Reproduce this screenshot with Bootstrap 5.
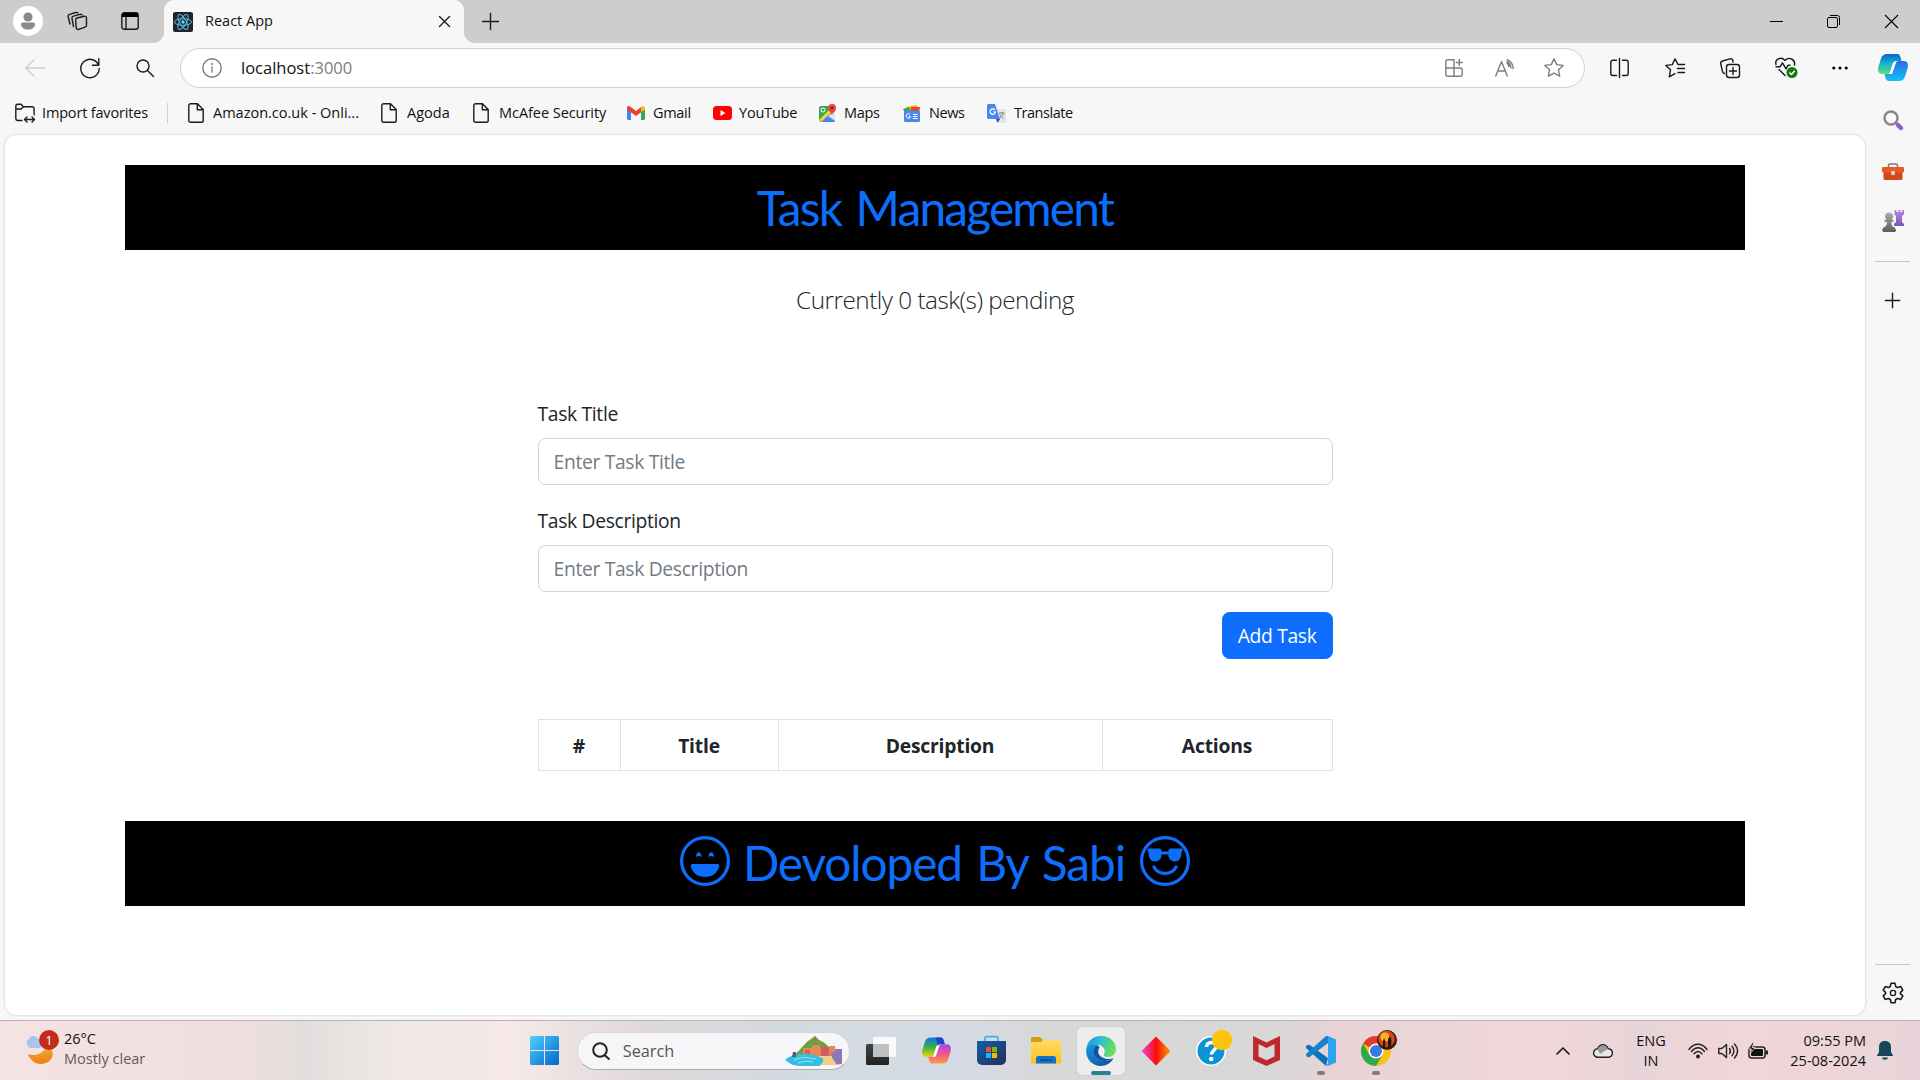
<!DOCTYPE html>
<html lang="en">
<head>
<meta charset="utf-8">
<title>React App</title>
<link rel="stylesheet" href="https://cdn.jsdelivr.net/npm/bootstrap@5.3.0/dist/css/bootstrap.min.css">
<style>
:root{font-size:20px}
body{width:1920px;height:1080px;overflow:hidden;font-family:"Open Sans","Noto Sans",sans-serif;font-size:14.5px;line-height:20px;color:#111;background:#f7f7f7}
svg{display:block;overflow:visible;flex:none}
.ln{fill:none;stroke:#1b1b1b;stroke-width:1.4;stroke-linecap:round;stroke-linejoin:round}
.gr{stroke:#7d7d7d}
/* tab strip */
.strip{height:43px;background:#cdcdcd;display:grid;grid-template-columns:56px 42px 63px 306px 47px 1fr 57px 57px 58px;justify-items:center;align-items:center}
.tab-live{width:300px;height:43px;background:#f7f7f7;border-radius:10px 10px 0 0;position:relative;padding:0 14px 0 9px;justify-self:start;margin-left:3px}
.tab-live::before,.tab-live::after{content:"";position:absolute;bottom:0;width:10px;height:10px}
.tab-live::before{left:-10px;background:radial-gradient(circle at 0 0,transparent 9.5px,#f7f7f7 10px)}
.tab-live::after{right:-10px;background:radial-gradient(circle at 100% 0,transparent 9.5px,#f7f7f7 10px)}
.strip>svg{margin-bottom:1px}
/* toolbar */
.tools{height:49px;display:grid;grid-template-columns:12px 46px 64px 46px 12px 1405px 8px 52px 60px 50px 62px 46px 1fr;align-items:center;justify-items:center}
.omni{width:1405px;height:40px;border:1px solid #cfcfcf;border-radius:20px;background:#fff;display:grid;grid-template-columns:11px 40px 1fr 50px 50px 50px 5px;align-items:center;justify-items:center}
.omni .addr{justify-self:start;margin-left:9px;font-size:16.5px}
/* favourites */
.favs{height:43px;padding:0 0 1px 15px}
.favs span{white-space:nowrap;letter-spacing:-.12px}
.fav{display:flex;align-items:center}
.fav svg{margin-right:7px}
/* viewport */
.main{height:885px}
.view{width:1860px;height:880px;margin-left:5px;background:#fff;border-radius:12px;box-shadow:0 0 3px #0003;padding-top:30px}
.app{width:1620px;margin:0 auto;font-size:19.3px;line-height:30px;letter-spacing:-.33px;color:#212529}
.band{height:85px;background:#000;color:#0d6efd;font-family:Lato,sans-serif;font-size:47.8px;line-height:85px;white-space:nowrap}
.band.top{letter-spacing:-1.8px;word-spacing:4px}
.band.bot{letter-spacing:-1.1px;word-spacing:3px}
.band.bot span{padding-bottom:2px}
.pend{font-weight:300;font-size:24.3px;line-height:38px;letter-spacing:-.5px;margin:31px 0 79px}
.formcol{width:795px;margin:0 auto}
.formcol .form-label{padding-top:1px;line-height:29px}
.formcol .form-control,.formcol .btn{font-size:19.3px;letter-spacing:-.33px;line-height:30px}
.formcol .form-control{border-color:#ced4da}
.formcol .form-control::placeholder{color:#727a82}
.formcol th{letter-spacing:-.2px;line-height:29px;padding-top:11px}
.side{width:55px;flex:none}
/* taskbar */
.taskbar{height:60px;flex:none;border-top:1px solid #b9b0b1;background:linear-gradient(90deg,#f5e2e2 0,#f1dfdf 230px,#e3dedd 300px,#efe8e7 400px,#f6e9e8 510px,#e0d9db 640px,#d3dadf 780px,#d5dbe5 950px,#d8d8d8 1050px,#d9d7d7 1280px,#e9d3d6 1340px,#ead5d8 1440px,#f3d6d9 1520px,#e8d5d9 1640px,#f2d5d8 1740px,#e8d5d9 1920px);display:grid;grid-template-columns:25px 492px 55px 281.5px repeat(10,55px) 139.5px 40px 40px 56px 38px 22px 38px 89px 38px;align-items:center;justify-items:center}
.find{width:273px;height:38px;border-radius:19px;background:#f6f6f8;border:1px solid #d9d5d8;border-bottom-color:#aaa9ad;padding:0 7px 0 14px;margin-left:1px}
.app-ic{width:48px;height:48px;border-radius:5px;position:relative}
.app-ic.now{background:#ededed;box-shadow:0 0 1px #999}
.app-ic i{position:absolute;bottom:0;left:50%;width:8px;height:4px;margin-left:-4px;border-radius:2px;background:#847a7c}
.app-ic.now i{width:20px;margin-left:-10px;background:#27838f}
.badge-n{position:absolute;left:14px;top:0;width:20px;height:20px;border-radius:50%;background:#c42b1c;color:#fff;text-align:center;font-size:13px;line-height:20px}
</style>
</head>
<body>
<svg width="0" height="0" class="position-absolute">
<defs>
<linearGradient id="gb" x1="0" y1="0" x2="0" y2="1"><stop offset="0" stop-color="#0b62c4"/><stop offset=".45" stop-color="#14b0d4"/><stop offset="1" stop-color="#5be07a"/></linearGradient>
<linearGradient id="gc" x1="0" y1="0" x2="0" y2="1"><stop offset="0" stop-color="#2a6be8"/><stop offset="1" stop-color="#17c0f5"/></linearGradient>
<linearGradient id="gd" x1="0" y1="0" x2="0" y2="1"><stop offset="0" stop-color="#1473e6"/><stop offset=".5" stop-color="#35b24a"/><stop offset="1" stop-color="#f5d000"/></linearGradient>
<linearGradient id="ge" x1="0" y1="0" x2="0" y2="1"><stop offset="0" stop-color="#a04be8"/><stop offset=".5" stop-color="#f0558a"/><stop offset="1" stop-color="#ff9a3c"/></linearGradient>
<linearGradient id="gw" gradientUnits="userSpaceOnUse" x1="0" y1="0" x2="29" y2="29"><stop offset="0" stop-color="#4fd0ff"/><stop offset="1" stop-color="#0467c8"/></linearGradient>
<linearGradient id="gm" x1="0" y1="0" x2="0" y2="1"><stop offset="0" stop-color="#f3b43a"/><stop offset="1" stop-color="#f07a12"/></linearGradient>
<linearGradient id="gs" x1="0" y1="0" x2="1" y2="1"><stop offset="0" stop-color="#0f5fae"/><stop offset="1" stop-color="#262f55"/></linearGradient>
<linearGradient id="gf" x1="0" y1="0" x2="0" y2="1"><stop offset="0" stop-color="#ffdb69"/><stop offset="1" stop-color="#ffc21a"/></linearGradient>
<linearGradient id="g1" x1="0" y1="0" x2="1" y2=".3"><stop offset="0" stop-color="#1b8fdb"/><stop offset=".5" stop-color="#2bc0d2"/><stop offset="1" stop-color="#64e05a"/></linearGradient>
<linearGradient id="g2" x1="0" y1="0" x2="1" y2="1"><stop offset="0" stop-color="#1a9ae0"/><stop offset="1" stop-color="#0b4a9e"/></linearGradient>
<linearGradient id="gr" x1="0" y1="0" x2="1" y2="0"><stop offset="0" stop-color="#f04ad8"/><stop offset=".5" stop-color="#fb0a10"/><stop offset="1" stop-color="#ff9a00"/></linearGradient>
<linearGradient id="gp" x1="0" y1="0" x2="0" y2="1"><stop offset="0" stop-color="#bb86f0"/><stop offset="1" stop-color="#7a55b0"/></linearGradient>
<linearGradient id="gk" x1="0" y1="0" x2="0" y2="1"><stop offset="0" stop-color="#adadad"/><stop offset="1" stop-color="#5c5c5c"/></linearGradient>
<linearGradient id="gt" x1="0" y1="0" x2="0" y2="1"><stop offset="0" stop-color="#444"/><stop offset="1" stop-color="#222"/></linearGradient>
<symbol id="doc" viewBox="0 0 16 20"><path class="ln" d="M2.500.8h7l5.700 5.800v10.900a1.800 1.800 0 0 1-1.800 1.800H2.600a1.800 1.800 0 0 1-1.800-1.800V2.600A1.800 1.800 0 0 1 2.500.8zM9.300 1v5.800h5.700"/></symbol>
</defs>
</svg>
<div class="d-flex flex-column h-100">
<header class="strip">
  <svg width="30" height="30" viewBox="0 0 30 30"><circle cx="15" cy="15" r="15" fill="#fff"/><circle cx="15" cy="11" r="4.600" fill="#8a8a8a"/><path d="M9.500 16.500h11A1.500 1.500 0 0 1 22 18c0 3.500-3 5.500-7 5.500S8 21.500 8 18a1.500 1.500 0 0 1 1.500-1.500z" fill="#8a8a8a"/></svg>
  <svg width="20" height="20" viewBox="0 0 20 20"><g class="ln"><path d="M10 7l7-1.800a2 2 0 0 1 2.500 2v7a2 2 0 0 1-1.400 1.900l-6.300 2.300a2 2 0 0 1-2.600-1.600L8.700 9.200A2 2 0 0 1 10 7z"/><path d="M6.500 15.500L5 7.500a2 2 0 0 1 1.500-2.400l6.500-1.800a2 2 0 0 1 2 .6M3 13L1.200 6a2 2 0 0 1 1.500-2.600l6-1.900a2 2 0 0 1 2.100.5"/></g></svg>
  <svg width="18" height="18" viewBox="0 0 18 18"><rect class="ln" x=".8" y=".8" width="16.400" height="16.400" rx="2.500"/><path d="M1 5V3a2 2 0 0 1 2-2h12a2 2 0 0 1 2 2v2z"/><path class="ln" d="M5 5v12"/></svg>
  <div class="tab-live d-flex align-items-center">
    <svg width="20" height="20" viewBox="0 0 20 20"><rect width="20" height="20" rx="2" fill="#20232a"/><g fill="none" stroke="#53c1de" stroke-width="1"><ellipse cx="10" cy="10" rx="8.500" ry="3.300"/><ellipse cx="10" cy="10" rx="8.500" ry="3.300" transform="rotate(60 10 10)"/><ellipse cx="10" cy="10" rx="8.500" ry="3.300" transform="rotate(120 10 10)"/></g><circle cx="10" cy="10" r="1.700" fill="#61dafb"/></svg>
    <span class="flex-grow-1" style="padding:0 0 1px 12px">React App</span>
    <svg width="11" height="11" viewBox="0 0 11 11"><path class="ln" d="M.5.5l10 10M10.500.5l-10 10"/></svg>
  </div>
  <svg width="17" height="17" viewBox="0 0 17 17"><path class="ln" d="M8.500.5v16M.5 8.500h16"/></svg>
  <span></span>
  <svg width="13" height="13" viewBox="0 0 13 13"><path d="M0 6.500h13" stroke="#000"/></svg>
  <svg width="13" height="13" viewBox="0 0 13 13" fill="none" stroke="#000"><rect x=".5" y="2.500" width="10" height="10" rx="1.500"/><path d="M3 .5h7.500a2 2 0 0 1 2 2V10"/></svg>
  <svg width="13" height="13" viewBox="0 0 13 13"><path d="M0 0l13 13M13 0L0 13" stroke="#000" stroke-width="1.100"/></svg>
</header>
<div class="d-flex">
<div class="flex-grow-1">
<nav class="tools">
  <span></span>
  <svg width="20" height="18" viewBox="0 0 20 18"><path class="ln" style="stroke:#cfcfcf" d="M19.500 9H1M9 .7L.7 9 9 17.300"/></svg>
  <svg width="20" height="20" viewBox="0 0 20 20"><path class="ln" d="M18.500 7A9.200 9.200 0 1 0 19.200 10.500M18.800.8v6.400h-6.300"/></svg>
  <svg width="18" height="18" viewBox="0 0 18 18"><g class="ln"><circle cx="7" cy="7" r="6"/><path d="M11.500 11.500l6 6"/></g></svg>
  <span></span>
  <div class="omni">
    <span></span>
    <svg width="20" height="20" viewBox="0 0 20 20"><circle class="ln gr" cx="10" cy="10" r="9.200"/><path class="ln gr" d="M10 9v5"/><circle cx="10" cy="6" r="1" fill="#777"/></svg>
    <span class="addr">localhost<span style="color:#7d7d7d">:3000</span></span>
    <svg width="18" height="18" viewBox="0 0 18 18"><path class="ln gr" d="M2.500.8H9v8.200H.8V2.500A1.700 1.700 0 0 1 2.500.8zM.8 9v6.500a1.700 1.700 0 0 0 1.700 1.700h13a1.700 1.700 0 0 0 1.700-1.700V10.700A1.700 1.700 0 0 0 15.500 9H9v8.200M14.300.5v6M11.300 3.500h6"/></svg>
    <svg width="19" height="18" viewBox="0 0 19 18"><path class="ln gr" d="M.7 17L6.500 2.500 12.300 17M2.700 12h7.600M12 4c1 .9 1.600 2.100 1.600 3.500M12.200 .6c3.200 1.300 5.600 4.600 6 9M12 2.400c2.100 1.300 3.600 3.500 4 6.400"/></svg>
    <svg width="20" height="19" viewBox="0 0 20 19"><path class="ln gr" d="M10 .8l2.700 5.800 6.500.8-4.700 4.400 1.200 6.400L10 15.100l-5.700 3.100 1.200-6.400L.8 7.400l6.500-.8z"/></svg>
    <span></span>
  </div>
  <span></span>
  <svg width="19" height="20" viewBox="0 0 19 20"><path class="ln" d="M6.500 2.300H2.800a2 2 0 0 0-2 2v11.200a2 2 0 0 0 2 2h3.700M12.500 2.300h3.700a2 2 0 0 1 2 2v11.200a2 2 0 0 1-2 2h-3.700M9.500.5v19"/></svg>
  <svg width="20" height="20" viewBox="0 0 20 20"><path class="ln" d="M13 6.500L10 .8 7.300 6.600.8 7.400l4.700 4.400-1.200 7L10 15.700M12.500 10.500h7M13 14.500h6.500M13 6.500h6.500"/></svg>
  <svg width="20" height="20" viewBox="0 0 20 20"><g class="ln"><rect x="6.500" y="6.500" width="13" height="13" rx="2.500"/><path d="M13 9.500v7M9.500 13h7M4.500 15.500a3 3 0 0 1-2-2L.8 6a2.500 2.500 0 0 1 1.700-3L10 .9a2.500 2.500 0 0 1 3 1.800V4"/></g></svg>
  <svg width="22" height="21" viewBox="0 0 22 21"><g class="ln"><path d="M1 7.500C-.5 2.500 6-1 10 3.500c4-4.500 10.500-1 9.500 4.500M4 12.500l6 6M1 9.800h4l2.500-4 3.500 6 2-3.500h2"/></g><circle cx="17" cy="15.500" r="5.500" fill="#107c10"/><path d="M14.500 15.500l2 2 3.200-3.800" fill="none" stroke="#fff" stroke-width="1.500"/></svg>
  <svg width="16" height="4" viewBox="0 0 16 4"><circle cx="1.800" cy="2" r="1.600"/><circle cx="8" cy="2" r="1.600"/><circle cx="14.200" cy="2" r="1.600"/></svg>
</nav>
<div class="favs d-flex align-items-center">
  <div class="fav"><svg width="20" height="20" viewBox="0 0 20 20"><path class="ln" d="M7 17.500H2.600A1.900 1.900 0 0 1 .8 15.600V3A1.900 1.900 0 0 1 2.700 1.200H6l2.500 2.500h8.600a2 2 0 0 1 2 2v6M.8 6h5.200l2.500-2.300M10 16.500h9.500M12 14l-2.500 2.500L12 19M17 14l2.500 2.500L17 19"/></svg><span style="width:106px;letter-spacing:-.17px">Import favorites</span></div>
  <div style="width:1px;height:20px;background:#cfcfcf;margin:0 20px 0 19px"></div>
  <div class="fav"><svg width="16" height="20" style="margin-right:9px"><use href="#doc"/></svg><span style="width:146px;letter-spacing:0">Amazon.co.uk - Onli...</span></div>
  <div class="fav" style="margin-left:22px"><svg width="16" height="20" style="margin-right:10px"><use href="#doc"/></svg><span style="width:44px;letter-spacing:0">Agoda</span></div>
  <div class="fav" style="margin-left:22px"><svg width="16" height="20" style="margin-right:10px"><use href="#doc"/></svg><span style="width:108px;letter-spacing:-.05px">McAfee Security</span></div>
  <div class="fav" style="margin-left:20px"><svg width="18" height="14" viewBox="0 0 18 14" style="margin-right:8px"><path fill="#4285f4" d="M0 2v10.500A1.500 1.500 0 0 0 1.500 14H4V5z"/><path fill="#34a853" d="M18 2v10.500a1.500 1.500 0 0 1-1.500 1.500H14V5z"/><path fill="#ea4335" d="M0 2C0 0 2-.5 3.500.7L9 5l5.500-4.300V6L9 10 0 3.500z"/><path fill="#fbbc04" d="M14 1.200C16-.7 18 .3 18 2v1.500L14 6z"/></svg><span style="width:39px;letter-spacing:-.3px">Gmail</span></div>
  <div class="fav" style="margin-left:21px"><svg width="19" height="14" viewBox="0 0 19 14"><rect width="19" height="14" rx="3.500" fill="#f00"/><path d="M7.500 4l5 3-5 3z" fill="#fff"/></svg><span style="width:58px;letter-spacing:-.2px">YouTube</span></div>
  <div class="fav" style="margin-left:21px"><svg width="19" height="19" viewBox="0 0 19 19"><rect x="1" y="2" width="16" height="16" rx="2" fill="#35a853"/><path d="M3 18l7-8 7 8z" fill="#4285f4"/><path d="M1 16L14 3l3 2L3 18z" fill="#fbd03a"/><path d="M10 12l7-5v10z" fill="#dfe3e8"/><path d="M14 11c-.5-2.500-4-3.500-4-7a4 4 0 0 1 8 0c0 3.500-3.500 4.500-4 7z" fill="#e8453c"/><circle cx="14" cy="4" r="1.300" fill="#7d1a14"/><circle cx="5" cy="6" r="2" fill="none" stroke="#fff"/></svg><span style="width:37px;letter-spacing:-.3px">Maps</span></div>
  <div class="fav" style="margin-left:22px"><svg width="18" height="17" viewBox="0 0 18 17"><path d="M3 2l11-2 1 6H4z" fill="#fbbc04"/><path d="M8 2h9l-1 6H8z" fill="#ea4335"/><path d="M0 4l6-2 3 6H2z" fill="#34a853"/><rect x="1" y="5.500" width="16" height="11.500" rx="1.500" fill="#4f86ec"/><path d="M7 9.500a2.200 2.200 0 1 0 .5 2H5.800M10 9.500h4.500M10 11.500h4.500M10 13.500h4.500" fill="none" stroke="#fff"/></svg><span style="width:37px;letter-spacing:-.4px;margin-left:1px">News</span></div>
  <div class="fav" style="margin-left:21px"><svg width="19" height="19" viewBox="0 0 19 19"><path d="M7 5h10.500A1.500 1.500 0 0 1 19 6.500v11a1.500 1.500 0 0 1-1.500 1.500H12z" fill="#e3e5e8"/><path d="M1.500 0H8l5 15H1.500A1.500 1.500 0 0 1 0 13.500v-12A1.500 1.500 0 0 1 1.500 0z" fill="#4c87ee"/><path d="M9 15h4l-2.500 4z" fill="#2b50b8"/><path d="M8 6a2.700 2.700 0 1 0 .5 2H6" fill="none" stroke="#fff" stroke-width="1.200"/><path d="M12 9h5.500M15 8v1M16.500 9c-.5 2.500-2 4-4 5M13 10.500c1 2 2 3 3.500 4" fill="none" stroke="#7b8086"/></svg><span style="letter-spacing:-.45px;margin-left:1px">Translate</span></div>
</div>
<main class="main">
  <div class="view">
    <div class="app">
      <h1 class="band top text-center mb-0 fw-normal">Task Management</h1>
      <p class="pend text-center">Currently 0 task(s) pending</p>
      <div class="formcol">
        <form>
          <div class="mb-3"><label class="form-label d-block mb-2" for="tt">Task Title</label><input id="tt" class="form-control" placeholder="Enter Task Title"></div>
          <div class="mb-3"><label class="form-label d-block mb-2" for="td">Task Description</label><input id="td" class="form-control" placeholder="Enter Task Description"></div>
          <div class="text-end"><button type="button" class="btn btn-primary">Add Task</button></div>
        </form>
        <table class="table table-bordered text-center mb-0" style="margin-top:60px;table-layout:fixed">
          <colgroup><col style="width:82px"><col style="width:158px"><col style="width:324px"><col></colgroup>
          <thead><tr><th>#</th><th>Title</th><th>Description</th><th>Actions</th></tr></thead>
        </table>
      </div>
      <div class="band bot d-flex justify-content-center align-items-center" style="margin-top:50px">
        <svg width="50" height="50" viewBox="0 0 50 50" class="mb-1"><circle cx="25" cy="25" r="23.400" fill="none" stroke="#0d6efd" stroke-width="3.200"/><path d="M12.500 28h25a1.800 1.800 0 0 1 1.700 2.200C37.500 37 32 41 25 41s-12.500-4-14.200-10.800A1.800 1.800 0 0 1 12.500 28z" fill="#0d6efd"/><path d="M16 21c0-6.500 5.500-6.500 5.500 0-1.700-1.500-3.800-1.500-5.500 0zM28.500 21c0-6.500 5.500-6.500 5.500 0-1.700-1.500-3.800-1.500-5.500 0z" fill="#0d6efd"/></svg>
        <span style="margin:0 15px 0 13px">Devoloped By Sabi</span>
        <svg width="50" height="50" viewBox="0 0 50 50" class="mb-1"><circle cx="25" cy="25" r="23.400" fill="none" stroke="#0d6efd" stroke-width="3.200"/><path d="M7.500 12.500H19q2.500 0 2.700 3h6.600q.2-3 2.700-3h11.500v2.500l-1 .8c0 6-2 9.700-6.500 9.700-4 0-6.500-3-6.700-7h-6.600c-.2 4-2.700 7-6.700 7-4.500 0-6.500-3.700-6.500-9.700l-1-.8z" fill="#0d6efd"/><path d="M14 31c4.500 8.500 17.500 8.500 22 0" fill="none" stroke="#0d6efd" stroke-width="3.200" stroke-linecap="round"/></svg>
      </div>
    </div>
  </div>
</main>
</div>
<aside class="side d-flex flex-column align-items-center">
  <svg width="30" height="27" viewBox="0 0 30 27" style="margin-top:11px"><path d="M9 0h10c2 0 3 1 3.500 3l1 4h-5c-2 0-3 1-3.500 3l-2.500 7c-.7 2-1.500 3-3.500 3H4c-4 0-4.500-4-3.500-7.500L3 4.500C4 1.500 6 0 9 0z" fill="url(#gb)"/><path d="M21 27H11c-2 0-3-1-3.500-3l-1-4h5c2 0 3-1 3.500-3l2.500-7c.7-2 1.500-3 3.500-3h5c4 0 4.500 4 3.500 7.500L27 22.500c-1 3-3 4.500-6 4.500z" fill="url(#gc)"/><path d="M17.500 9l-3.500 11h-2.500L15 8.500z" fill="#fff"/></svg>
  <svg width="20" height="20" viewBox="0 0 20 20" style="margin-top:29px"><circle cx="8" cy="8" r="6.500" fill="#fafafa" stroke="#888" stroke-width="2.400"/><path d="M12.500 13l2 2" stroke="#888" stroke-width="2"/><path d="M15 15l3 3" stroke="#8e5fc8" stroke-width="4.500" stroke-linecap="round"/></svg>
  <svg width="22" height="17" viewBox="0 0 22 17" style="margin-top:33px"><path d="M6.500 5V2.500A1.500 1.500 0 0 1 8 1h6a1.500 1.500 0 0 1 1.500 1.500V5" fill="none" stroke="#7a7a7a" stroke-width="1.500"/><rect x="1.500" y="8" width="19" height="9" rx="1.500" fill="#d2481a"/><rect y="4" width="22" height="5.500" rx="1.200" fill="#e85a22"/><circle cx="11" cy="10" r="2.200" fill="#d5d5d5"/></svg>
  <svg width="22" height="22" viewBox="0 0 22 22" style="margin-top:30px"><path d="M12.500 0h2v2h2V0h2v2h1.500V0h2v4.500l-2 1.500v6l2 2v2h-10v-2l2-2V6l-1.500-1.500z" fill="url(#gp)"/><path d="M7.200 2.500a4 4 0 0 1 2.800 7l1.500.7v1.800H9.300c0 3 1 4.500 3.200 5.500l1.700 2.500-1 2H1.200L0 20l1.500-2.500c2.200-1 3.500-2.500 3.500-5.500H2.500v-1.800L4.300 9.500a4 4 0 0 1 2.900-7z" fill="url(#gk)"/></svg>
  <div style="width:35px;height:1px;background:#c6c6c6;margin-top:29px"></div>
  <svg width="15" height="15" viewBox="0 0 15 15" style="margin-top:31px"><path class="ln" d="M7.500.3v14.400M.3 7.500h14.400"/></svg>
  <div style="width:35px;height:1px;background:#c6c6c6;margin-top:656px"></div>
  <svg width="22" height="22" viewBox="-11 -11 22 22" style="margin-top:17px"><path class="ln" style="stroke-width:1.600" d="M-2-9.700h4l.7 3.200 2 1.100 3.100-1 2 3.500-2.400 2.200v1.400l2.400 2.200-2 3.500-3.100-1-2 1.100-.7 3.200h-4l-.7-3.200-2-1.100-3.100 1-2-3.500 2.400-2.200V-.7l-2.400-2.200 2-3.500 3.100 1 2-1.100z"/><circle class="ln" r="2.600"/></svg>
</aside>
</div>
<footer class="taskbar">
  <span></span>
  <div class="d-flex align-items-center" style="justify-self:start;padding-bottom:3px">
    <div class="position-relative" style="margin-bottom:5px"><svg width="34" height="34" viewBox="0 0 34 34"><path d="M3 24c9 3 17-2 19-9 9 4 8 18-6 19-6 0-11-4-13-10z" fill="url(#gm)"/><path d="M5 18a5 5 0 0 1-1-9C5 5 11 5 13 9c5-1 6 9 1 9z" fill="#a9c4f1"/></svg><span class="badge-n">1</span></div>
    <div style="padding-left:5px"><div>26°C</div><div style="color:#5f5a5b">Mostly clear</div></div>
  </div>
  <svg width="29" height="29" viewBox="0 0 29 29" fill="url(#gw)"><path d="M1 0h13v14H0V1zM15 0h13l1 1v13H15zM0 15h14v14H1l-1-1zM15 15h14v13l-1 1H15z"/></svg>
  <div class="find d-flex align-items-center">
    <svg width="18" height="18" viewBox="0 0 18 18"><g fill="none" stroke="#222" stroke-width="2"><circle cx="8" cy="8" r="6.800"/><path d="M12.500 13l5 4.500"/></g></svg>
    <span style="font-size:16.300px;color:#555;padding-left:13px">Search</span>
    <svg class="ms-auto" width="57" height="30" viewBox="0 0 57 30"><path d="M8 20c6-4 12-14 18-17l4-3 4 4c6 2 12 8 16 16z" fill="#6f9e3e"/><path d="M30 0l2 5h-4z" fill="#a87748"/><path d="M18 12h9V9h8v3h9v-2h6v10H18z" fill="#e58a55"/><path d="M20 14h5v7h-5zM36 11h8v10h-8z" fill="#cf5f5c"/><path d="M46 16h4v-3h7v15l-9 1z" fill="#8d7ab5"/><path d="M12 20h34l6 9H36z" fill="#f3cf85"/><path d="M0 24c8-8 28-7 37-2 4 3-2 6-2 8H15C7 30 3 26 0 24z" fill="#35bfe3"/><path d="M9 24c8-4 17-2 22-1M13 27c6-2 10-2 15-1" stroke="#9ae4f2" fill="none"/><path d="M8 16h3v5H7z" fill="#555b86"/></svg>
  </div>
  <svg width="30" height="28" viewBox="0 0 30 28"><rect y="7" width="23" height="21" rx="1.500" fill="url(#gt)"/><rect x="7" width="23" height="20" rx="1.500" fill="#fff" opacity=".85"/><path d="M7 7h16v13H7z" fill="#bfc0c1"/></svg>
  <svg width="29" height="27" viewBox="0 0 30 27"><path d="M9 0h10c2 0 3 1 3.500 3l1 4h-5c-2 0-3 1-3.500 3l-2.500 7c-.7 2-1.500 3-3.500 3H4c-4 0-4.500-4-3.500-7.500L3 4.500C4 1.500 6 0 9 0z" fill="url(#gd)"/><path d="M21 27H11c-2 0-3-1-3.500-3l-1-4h5c2 0 3-1 3.500-3l2.500-7c.7-2 1.500-3 3.500-3h5c4 0 4.500 4 3.500 7.500L27 22.500c-1 3-3 4.500-6 4.500z" fill="url(#ge)"/><path d="M14 0h5c2 0 3 1 3.500 3l1 4h-5c-1 0-2 .5-2.500 1z" fill="#1b48c8"/><path d="M17.500 9l-3.500 11h-2.500L15 8.500z" fill="#fff"/></svg>
  <svg width="29" height="29" viewBox="0 0 29 29"><path d="M8 6V2a1.500 1.500 0 0 1 1.500-1.300h10A1.500 1.500 0 0 1 21 2v4" fill="none" stroke="#2bb6f2" stroke-width="1.700"/><path d="M0 5h29v19a5 5 0 0 1-5 5H5a5 5 0 0 1-5-5z" fill="url(#gs)"/><path d="M9 11h5v5H9z" fill="#f25022"/><path d="M15 11h5v5h-5z" fill="#7fba00"/><path d="M9 17h5v5H9z" fill="#1fb0f5"/><path d="M15 17h5v5h-5z" fill="#ffb900"/></svg>
  <svg width="30" height="27" viewBox="0 0 30 27"><path d="M0 1.500A1.500 1.500 0 0 1 1.500 0H9l3 3v5H0z" fill="#d99b0b"/><path d="M0 5h10l2-2h16.500A1.500 1.500 0 0 1 30 4.500V25a1.500 1.500 0 0 1-1.500 1.500h-27A1.500 1.500 0 0 1 0 25z" fill="url(#gf)"/><path d="M5 26.500v-5a2.500 2.500 0 0 1 2.500-2.500h15a2.500 2.500 0 0 1 2.500 2.500v5z" fill="#1172c8"/><path d="M9 23h12" stroke="#0a4e92" stroke-width="1.500"/></svg>
  <div class="app-ic now d-flex align-items-center justify-content-center"><svg width="30" height="30" viewBox="0 0 30 30"><path d="M.2 14C1 5 7 0 15 0c9 0 15 6 15 13 0 5-4 8-8 8-3 0-5-1-4.500-2.500C20 15 18 9 11 9 6 9 1.500 11 .2 14z" fill="url(#g1)"/><path d="M.1 15C0 11 5 8 11 9c-4 2-5 7-2.500 11 3 5 11 7 19 2.500C25 27 20 30 15 30 6 30 .2 23 .1 15z" fill="url(#g2)"/><path d="M11 9c7 0 9 6 7 9.500-.5.700-.5 1.500.5 2-5-.5-8-2.500-7.500-5.500.2-2 1-3 2-4-1-.8-1-1.300-2-2z" fill="#ededed" opacity=".9"/><path d="M11 9c-4 2-5 7-2.500 11 3 5 11 7 19 2.500-6 1.500-13.500-.5-15-5-.8-3 .2-5 1-6-.5-1-1.500-2-2.500-2.500z" fill="#0d55a6"/></svg><i></i></div>
  <svg width="30" height="30" viewBox="0 0 30 30"><path d="M15 .5L29.500 15 15 29.500.5 15z" fill="url(#gr)"/></svg>
  <svg width="30" height="30" viewBox="0 0 30 30"><circle cx="15" cy="15" r="14.200" fill="#0a94d6" stroke="#fff" stroke-width="1.500"/><path d="M10.500 11c0-6 9.500-6 9.500-.5 0 4-4.500 4-4.500 8" fill="none" stroke="#fff" stroke-width="3.600"/><circle cx="15.200" cy="23" r="2.300" fill="#fff"/><circle cx="26" cy="4" r="10.200" fill="#fdc30c"/></svg>
  <svg width="27" height="30" viewBox="0 0 27 30"><path d="M0 0l13.500 6.500L27 0v24l-13.500 6L0 24zM5.500 8v12.500l8 3.700 8-3.700V8l-8 4z" fill="#c0282d" fill-rule="evenodd"/></svg>
  <div class="app-ic d-flex align-items-center justify-content-center"><svg width="30" height="30" viewBox="0 0 30 30"><path d="M22 22L3 8.500 0 10v2l20 18z" fill="#0b73bb"/><path d="M22 7L3 21.500 0 20v-2L20 0h2z" fill="#1583cc"/><path d="M22 0l8 3.500v23L22 30l-2-.5 2-2z" fill="#2ea3f2"/></svg><i></i></div>
  <div class="app-ic d-flex align-items-center justify-content-center"><svg width="30" height="30" viewBox="0 0 30 30"><circle cx="15" cy="15" r="15" fill="#fbc116"/><path d="M15 15L2 7.500A15 15 0 0 1 28 7.500H15z" fill="#e33b2e"/><path d="M2 7.500A15 15 0 0 0 15 30l6.500-11.200L15 15 8.500 18.700z" fill="#2da94f"/><circle cx="15" cy="15" r="7.500" fill="#fff"/><circle cx="15" cy="15" r="6" fill="#3b78e7"/><circle cx="26" cy="4" r="10" fill="#3a1a10"/><circle cx="25.500" cy="3" r="8.300" fill="#d8481a"/><circle cx="24" cy="1" r="4.500" fill="#f9b52a"/><path d="M22 12V5l1-3 1.200 3v8zM27 12V3l2-3 1.500 4-.5 7z" fill="#261611"/></svg><i></i></div>
  <span></span>
  <svg width="14" height="8" viewBox="0 0 14 8"><path class="ln" style="stroke-width:1.700" d="M1 7l6-6 6 6"/></svg>
  <svg width="20" height="14" viewBox="0 0 20 14"><path d="M5 13.200a4.200 4.200 0 0 1-.5-8.400C6 1.500 9-.2 12 1.200c1.700.8 2.700 2 3.200 3.600 5.500.2 5.500 8.400 0 8.400z" fill="#e9e9e9" stroke="#222" stroke-width="1.400"/><path d="M4.500 5C6.500 1 11 0 14 4l1 1-8 5z" fill="#999"/></svg>
  <div class="text-center"><div>ENG</div><div>IN</div></div>
  <svg width="20" height="16" viewBox="0 0 20 16"><path class="ln" style="stroke:#222" d="M1 6.500c5-7 13-7 18 0M3.500 8.500c4-5 9-5 13 0M6 10.700c2.500-3 5.500-3 8 0"/><circle cx="10" cy="13.500" r="2" fill="#222"/></svg>
  <svg width="20" height="16" viewBox="0 0 20 16"><path class="ln" style="stroke:#222" d="M.8 5.500h3L8.500 1.500v13l-4.700-4h-3zM11.500 5.500c1.300 1.700 1.300 3.300 0 5M14 3.300c2.500 3 2.500 6.400 0 9.400M16.500 1c4 4.500 4 9.500 0 14"/></svg>
  <svg width="20" height="16" viewBox="0 0 20 16"><rect x="1" y="4" width="16" height="11" rx="2.500" fill="none" stroke="#222" stroke-width="1.500"/><rect x="3" y="6" width="12" height="7" rx="1" fill="#111"/><path d="M17.500 7.500H20v4h-2.500z" fill="#222"/><path d="M4.500-.5L.5 6h3L2 11l5-6.500H4l2-5z" fill="#111" stroke="#ecd5d8" stroke-width=".8"/></svg>
  <div class="text-end" style="justify-self:end;white-space:nowrap"><div>09:55 PM</div><div>25-08-2024</div></div>
  <svg width="16" height="19" viewBox="0 0 16 19"><path d="M8 0c4 0 6 2.500 6 6v5l2 3.500V15H0v-.5L2 11V6c0-3.500 2-6 6-6zM5 16.500h6c-.5 3-5.500 3-6 0z" fill="#16475a"/></svg>
</footer>
</div>
</body>
</html>
